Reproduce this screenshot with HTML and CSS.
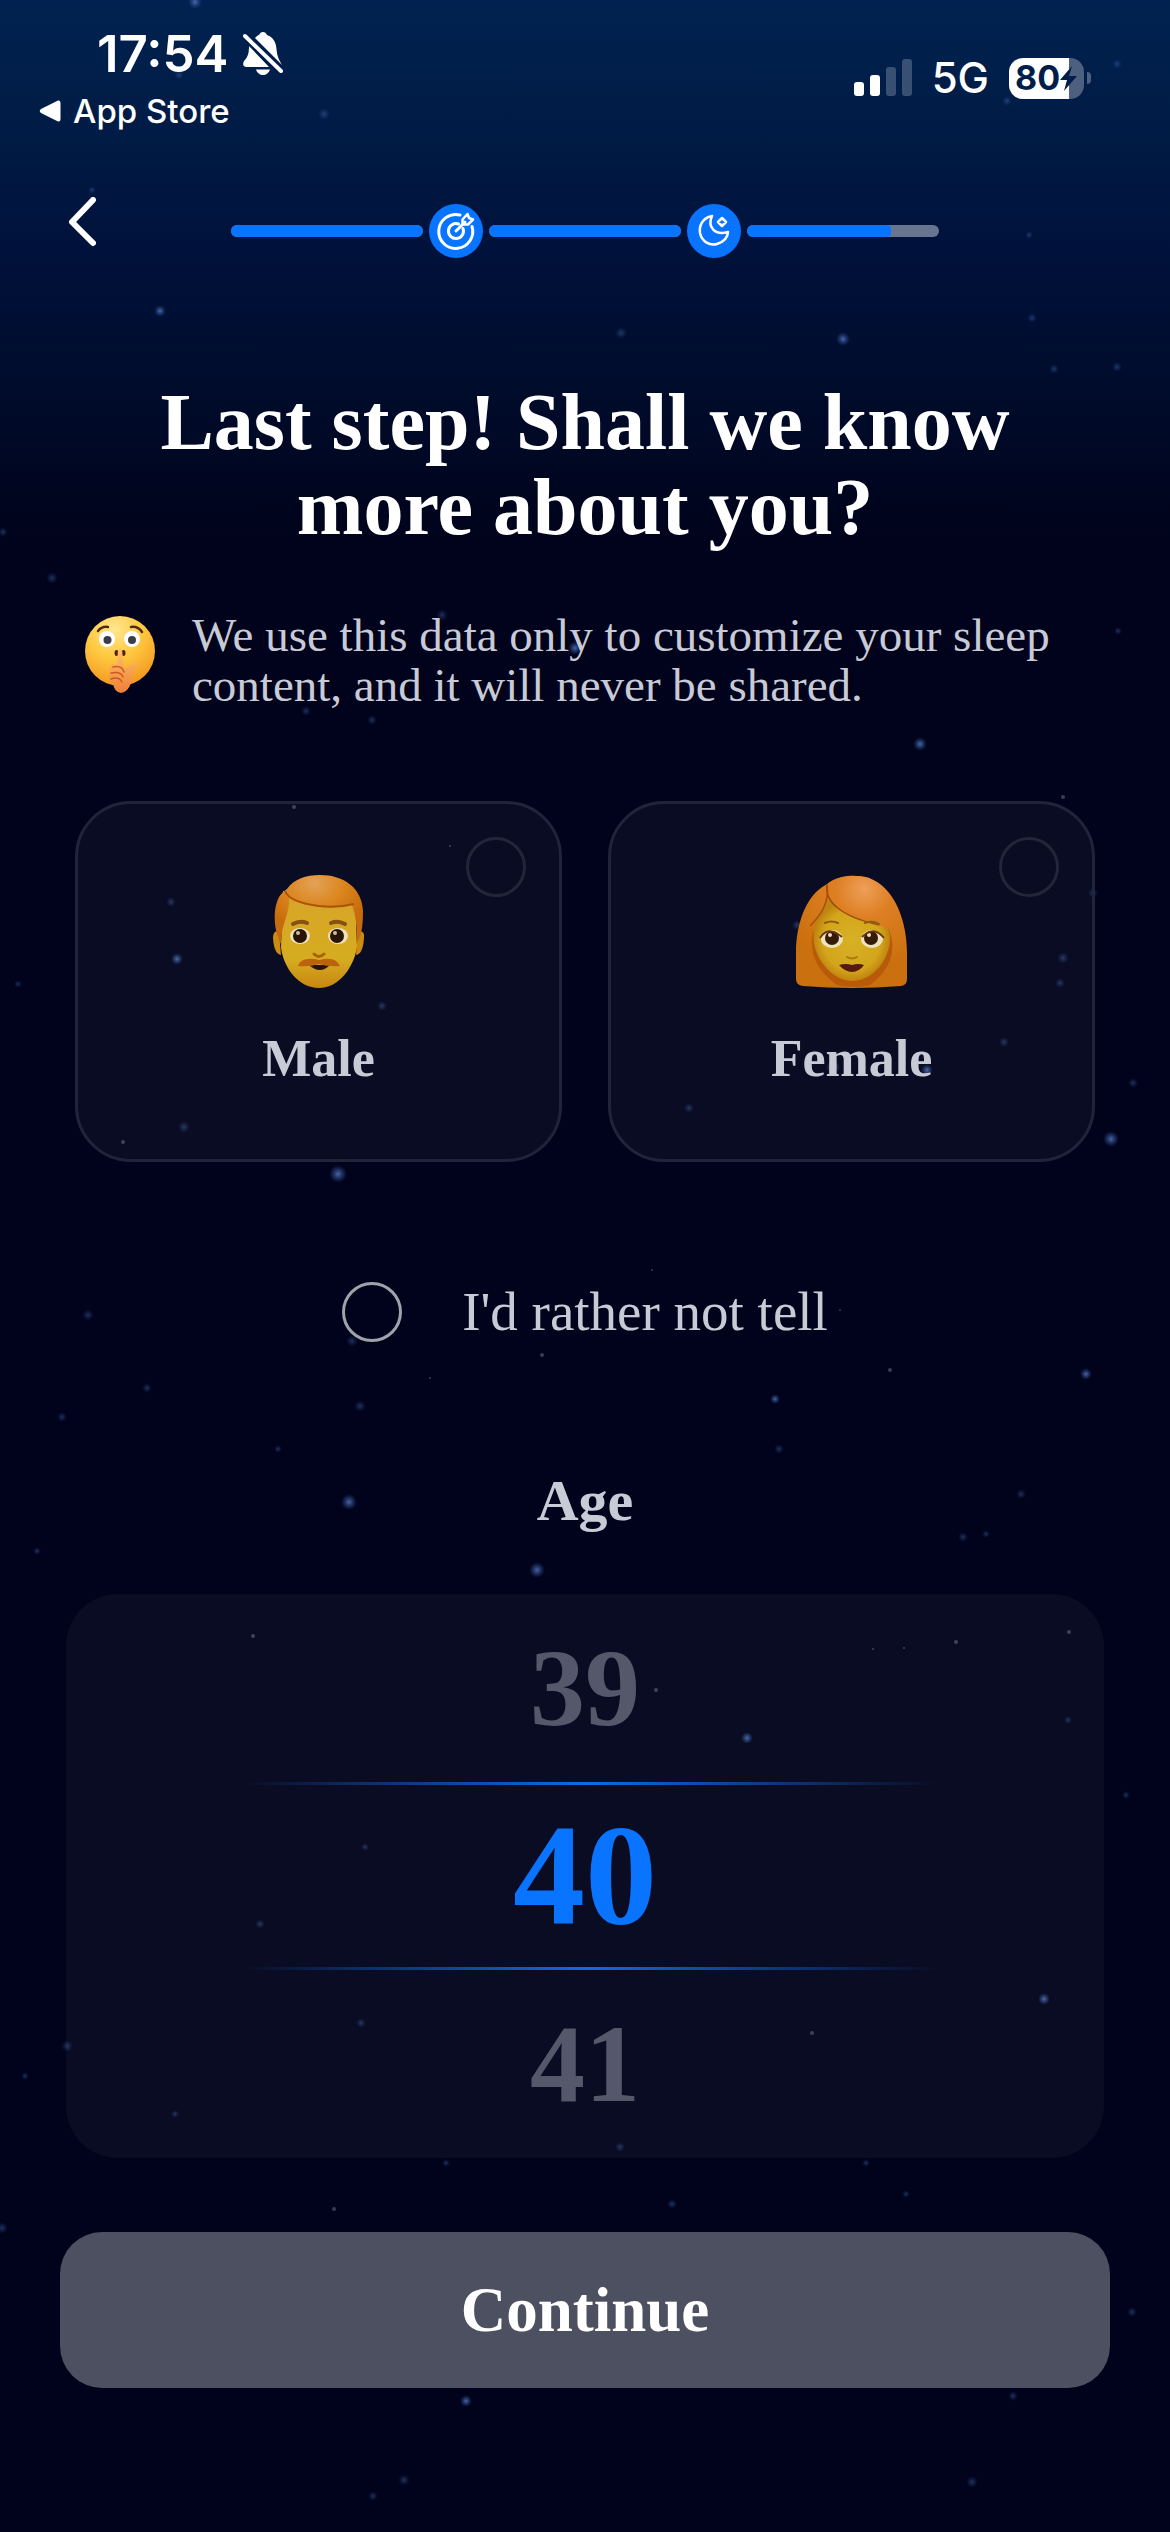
FILE: index.html
```html
<!DOCTYPE html>
<html lang="en">
<head>
<meta charset="utf-8">
<meta name="viewport" content="width=device-width, initial-scale=1">
<title>About you</title>
<link rel="stylesheet" href="styles.css">
</head>
<body>
<svg class="stars" viewBox="0 0 1170 2532" preserveAspectRatio="xMidYMid slice" aria-hidden="true">
  <defs>
    <radialGradient id="star"><stop offset="0" stop-color="#5878bd"/><stop offset=".45" stop-color="#3f5fa6" stop-opacity=".6"/><stop offset="1" stop-color="#2a4a90" stop-opacity="0"/></radialGradient>
  </defs>
  <g fill="url(#star)" opacity=".85">
    <circle cx="338" cy="1174" r="9"/><circle cx="1111" cy="1139" r="8"/><circle cx="349" cy="1502" r="8"/><circle cx="920" cy="744" r="7"/><circle cx="537" cy="1570" r="8"/><circle cx="195" cy="2" r="7"/><circle cx="160" cy="311" r="6"/><circle cx="843" cy="339" r="7"/><circle cx="575" cy="648" r="7"/><circle cx="177" cy="959" r="6"/><circle cx="775" cy="1399" r="5"/><circle cx="747" cy="1738" r="6"/><circle cx="1044" cy="1999" r="6"/><circle cx="466" cy="2401" r="6"/><circle cx="1086" cy="1374" r="6"/><circle cx="833" cy="1067" r="7"/><circle cx="927" cy="1070" r="6"/>
  </g>
  <g fill="url(#star)" opacity=".4">
    <circle cx="179" cy="75" r="5"/><circle cx="324" cy="114" r="6"/><circle cx="1117" cy="64" r="5"/><circle cx="1007" cy="101" r="5"/><circle cx="1029" cy="235" r="4"/><circle cx="92" cy="190" r="4"/><circle cx="621" cy="333" r="6"/><circle cx="1054" cy="369" r="5"/><circle cx="1117" cy="367" r="5"/><circle cx="1032" cy="318" r="5"/><circle cx="52" cy="578" r="6"/><circle cx="3" cy="532" r="5"/><circle cx="442" cy="615" r="6"/><circle cx="306" cy="711" r="5"/><circle cx="372" cy="720" r="5"/><circle cx="1118" cy="631" r="4"/><circle cx="18" cy="984" r="4"/><circle cx="184" cy="1127" r="6"/><circle cx="171" cy="902" r="5"/><circle cx="382" cy="1006" r="5"/><circle cx="1063" cy="958" r="6"/><circle cx="1060" cy="983" r="5"/><circle cx="1093" cy="893" r="5"/><circle cx="1004" cy="1042" r="5"/><circle cx="689" cy="1108" r="5"/><circle cx="797" cy="925" r="5"/><circle cx="1133" cy="1083" r="5"/><circle cx="88" cy="1315" r="6"/><circle cx="147" cy="1388" r="5"/><circle cx="352" cy="1341" r="6"/><circle cx="360" cy="1406" r="6"/><circle cx="278" cy="1449" r="4"/><circle cx="62" cy="1417" r="5"/><circle cx="779" cy="1449" r="5"/><circle cx="1021" cy="1494" r="5"/><circle cx="963" cy="1537" r="5"/><circle cx="986" cy="1534" r="4"/><circle cx="37" cy="1551" r="4"/><circle cx="1126" cy="1795" r="4"/><circle cx="365" cy="1847" r="4"/><circle cx="260" cy="1924" r="5"/><circle cx="361" cy="2023" r="5"/><circle cx="67" cy="2046" r="6"/><circle cx="25" cy="2076" r="4"/><circle cx="175" cy="2114" r="4"/><circle cx="1068" cy="1720" r="4"/><circle cx="620" cy="2147" r="5"/><circle cx="2" cy="2228" r="6"/><circle cx="672" cy="2204" r="5"/><circle cx="446" cy="2163" r="4"/><circle cx="866" cy="2163" r="4"/><circle cx="1013" cy="2396" r="5"/><circle cx="1132" cy="2312" r="5"/><circle cx="404" cy="2480" r="6"/><circle cx="373" cy="2496" r="5"/><circle cx="972" cy="2482" r="6"/><circle cx="906" cy="2194" r="4"/>
  </g>
  <g fill="#8a93ad" opacity=".4">
    <circle cx="123" cy="1142" r="2"/><circle cx="294" cy="807" r="2"/><circle cx="450" cy="846" r="1"/><circle cx="253" cy="1636" r="2"/><circle cx="956" cy="1642" r="2"/><circle cx="1069" cy="1632" r="2"/><circle cx="873" cy="1649" r="1"/><circle cx="904" cy="1648" r="1"/><circle cx="656" cy="1690" r="2"/><circle cx="812" cy="2033" r="2"/><circle cx="890" cy="1370" r="2"/><circle cx="652" cy="1270" r="1"/><circle cx="542" cy="1355" r="2"/><circle cx="430" cy="1378" r="1"/><circle cx="1063" cy="797" r="2"/><circle cx="334" cy="2209" r="2"/><circle cx="840" cy="1310" r="1"/>
  </g>
</svg>

<header>
  <div class="status">
    <div class="status-left">
      <div class="clock">
        <span>17:54</span>
        <svg width="40" height="44" viewBox="0 0 40 44" role="img" aria-label="Silent mode">
          <path fill="#fff" d="M12 6 C14 3.500 16 3 16 3 C17 1 18 0 20 0 C22 0 23 1 24 3 C30 5 33 10 33.500 17 C34 23 35 26 39 33 Z"/>
          <path fill="#fff" d="M6 14 L26 35 H3 C-1 34 0 31 1 29 C5 25 6 21 6 14Z M13 37.500 H27 C26 41 23 43 20 43 C17 43 14 41 13 37.500Z"/>
          <path stroke="#001c4a" stroke-width="8" d="M1 3 L39 40"/>
          <path stroke="#fff" stroke-width="4" stroke-linecap="round" d="M2 4 L38 39"/>
        </svg>
      </div>
      <a class="return" href="#">
        <svg width="22" height="22" viewBox="0 0 22 22" aria-hidden="true"><path fill="#fff" d="M19 .6 Q21.500 0 21.500 3 V19 Q21.500 22 19 21.400 L2 13 Q-.5 11 2 9Z"/></svg>
        <span>App Store</span>
      </a>
    </div>
    <div class="status-right">
      <svg width="58" height="38" viewBox="0 0 58 38" fill="#fff" role="img" aria-label="Signal, two of four bars"><rect y="23" width="10" height="14" rx="3"/><rect x="16" y="16" width="10" height="21" rx="3"/><g opacity=".22"><rect x="32" y="8" width="10" height="29" rx="3"/><rect x="48" width="10" height="37" rx="3"/></g></svg>
      <span class="network">5G</span>
      <span class="battery"><span class="battery-level">80</span>
        <svg width="17" height="25" viewBox="0 0 17 25" aria-hidden="true"><path fill="#001e4b" d="M12 0 L0 14 H7 L4 25 L17 10 H9Z"/></svg>
      </span>
    </div>
  </div>
  <nav class="steps" aria-label="Setup progress">
    <button class="back" type="button" aria-label="Back">
      <svg width="28" height="50" viewBox="0 0 28 50" fill="none" stroke="#fff" stroke-width="6" stroke-linecap="round" stroke-linejoin="round" aria-hidden="true"><path d="M25 3 L4 25 L25 46"/></svg>
    </button>
    <div class="progress">
      <span class="bar"><span class="fill" style="width:100%"></span></span>
      <span class="step">
        <svg width="40" height="40" viewBox="0 0 40 40" fill="none" stroke="#fff" stroke-width="3" stroke-linejoin="round" stroke-linecap="round" aria-hidden="true"><path d="M24 4 A17 17 0 1 0 36 15.500"/><path d="M22.500 13 A7.500 7.500 0 1 0 27 17.500"/><path d="M20 20 L29 11"/><path d="M26.500 12.500 V8.500 L31.500 3 L33 7 L37 8.500 L32 13.500 H28Z" stroke-width="2.500"/></svg>
      </span>
      <span class="bar"><span class="fill" style="width:100%"></span></span>
      <span class="step">
        <svg width="40" height="40" viewBox="0 0 40 40" fill="none" stroke="#fff" stroke-width="2.500" stroke-linejoin="round" aria-hidden="true"><path d="M18 5 C8 7 5 15 6 22 C8 31 16 35 23 33 C30 31 34 26 34 21 C21 25 13 16 18 5Z"/><path d="M28 7 L32 11 L28 15 L24 11Z"/></svg>
      </span>
      <span class="bar"><span class="fill" style="width:75%"></span></span>
    </div>
  </nav>
</header>

<main>
  <h1>Last step! Shall we know more about you?</h1>

  <div class="note">
    <svg width="70" height="78" viewBox="0 0 70 78" aria-hidden="true">
      <defs>
        <radialGradient id="face" cx=".42" cy=".2" r=".85"><stop offset="0" stop-color="#ffe791"/><stop offset=".45" stop-color="#ffca42"/><stop offset="1" stop-color="#f2931c"/></radialGradient>
        <linearGradient id="hand" x1="0" y1="0" x2="0" y2="1"><stop offset="0" stop-color="#ffc36b"/><stop offset="1" stop-color="#ef8038"/></linearGradient>
      </defs>
      <circle cx="35" cy="35" r="35" fill="url(#face)"/>
      <circle cx="22" cy="23" r="8" fill="#fff"/><circle cx="47" cy="23" r="8" fill="#fff"/>
      <circle cx="22.500" cy="24" r="4" fill="#3b3d48"/><circle cx="47" cy="24" r="4" fill="#3b3d48"/>
      <path d="M13 15 Q17 10 23 11 M46 11 Q53 10 57 16" fill="none" stroke="#4f2b10" stroke-width="2.500" stroke-linecap="round"/>
      <ellipse cx="31.500" cy="37" rx="2" ry="3" fill="#54220e"/><ellipse cx="38.500" cy="37" rx="2" ry="3" fill="#54220e"/>
      <path d="M32 49 L33 34 Q35 31 37 34 L39 53 L47 49 Q50 48 53 48 Q52 51 48 55 L46 67 Q43 76 36 77 Q29 76 28 67 Q22 64 25 57 Q23 51 28 48Z" fill="url(#hand)"/>
      <path d="M28 51 Q37 49 39 56 M26 57 Q36 55 38 61 M26 63 Q34 60 37 66" fill="none" stroke="#cc5a24" stroke-width="1.500" stroke-linecap="round"/>
    </svg>
    <p>We use this data only to customize your sleep content, and it will never be shared.</p>
  </div>

  <form>
    <div class="choices">
      <label class="card">
        <input class="radio" type="radio" name="gender" value="male">
        <svg width="120" height="120" viewBox="0 0 120 120" aria-hidden="true">
          <defs>
            <linearGradient id="manskin" x1="0" y1="0" x2="0" y2="1"><stop offset="0" stop-color="#d8a42a"/><stop offset=".7" stop-color="#d6ac20"/><stop offset="1" stop-color="#c78612"/></linearGradient>
            <radialGradient id="manhair" cx=".45" cy=".12" r=".65"><stop offset="0" stop-color="#e3a258"/><stop offset=".5" stop-color="#dc861f"/><stop offset="1" stop-color="#c76c0c"/></radialGradient>
          </defs>
          <path d="M20 60 Q14 59 14 67 Q15 83 22 84Z M99 60 Q106 59 105 67 Q104 83 97 84Z" fill="#cb8c10"/>
          <path d="M24 20 H96 L98 76 C95 96 80 117 60 117 C39 117 24 96 22 76Z" fill="url(#manskin)"/>
          <path d="M22 73 C15 61 14 41 18 31 C20 24 25 20 28 18 C35 8 47 4 61 4 C85 4 103 17 104 40 C104 56 102 66 98 72 C98 56 97 45 93 34 C71 39 43 36 30 27 C31 43 22 53 22 73Z" fill="url(#manhair)"/>
          <path d="M26 20 Q30 31 60 35 Q79 37 95 33" fill="none" stroke="#a95407" stroke-width="2"/>
          <ellipse cx="41" cy="65" rx="10" ry="8" fill="#eee0ba"/><ellipse cx="79" cy="65" rx="10" ry="8" fill="#eee0ba"/>
          <circle cx="41" cy="65" r="7" fill="#291507"/><circle cx="78" cy="65" r="7" fill="#291507"/>
          <circle cx="39" cy="62" r="2" fill="#c9bda7"/><circle cx="76" cy="62" r="2" fill="#c9bda7"/>
          <path d="M34 53 Q41 49 48 52 M72 52 Q79 49 86 53" fill="none" stroke="#875114" stroke-width="4" stroke-linecap="round"/>
          <path d="M55 83 Q60 88 65 83" fill="none" stroke="#a66309" stroke-width="3" stroke-linecap="round"/>
          <path d="M50 94 H71 Q61 104 50 94Z" fill="#271608"/>
          <path d="M39 95 Q42 86 56 88 L60 89 L65 88 Q77 86 81 95 Q69 96 60 93 Q51 96 39 95Z" fill="#bc640c"/>
        </svg>
        <span class="card-name">Male</span>
      </label>
      <label class="card">
        <input class="radio" type="radio" name="gender" value="female">
        <svg width="120" height="120" viewBox="0 0 120 120" aria-hidden="true">
          <defs>
            <radialGradient id="womhair" gradientUnits="userSpaceOnUse" cx="72" cy="18" r="80"><stop offset="0" stop-color="#ee9f58"/><stop offset=".35" stop-color="#de7f24"/><stop offset="1" stop-color="#cb700e"/></radialGradient>
            <radialGradient id="womskin"><stop offset="0" stop-color="#d8b125"/><stop offset=".75" stop-color="#d3a51b"/><stop offset="1" stop-color="#bf830f"/></radialGradient>
          </defs>
          <path d="M38 12 C46 4 66 4 77 7 C104 17 115 52 115 82 V108 Q115 114 109 115 Q60 119 11 115 Q4 114 4 108 V82 C4 50 16 20 38 12Z" fill="url(#womhair)"/>
          <path d="M21 60 Q14 92 45 114 Q60 118 78 114 Q109 91 97 58Z" fill="#b85a0a"/>
          <path d="M36 29 C24 45 20 54 22 72 C25 92 43 110 60 110 C79 110 96 92 98 70 Q99 57 90 50 Q62 47 38 29Z" fill="url(#womskin)"/>
          <path d="M35 13 Q34 29 47 38 Q60 48 86 54 Q103 58 113 77 C109 43 98 17 77 7 C64 3 46 4 35 13Z" fill="url(#womhair)"/>
          <path d="M35 13 Q33 28 47 38 Q60 48 87 54" fill="none" stroke="#9e4e09" stroke-width="1.500"/>
          <path d="M35 13 C38 32 28 45 18 55" fill="none" stroke="#a8510b" stroke-width="1.500"/>
          <ellipse cx="40" cy="68" rx="11" ry="9" fill="#eee1bb"/><ellipse cx="80" cy="68" rx="11" ry="9" fill="#eee1bb"/>
          <circle cx="40" cy="67" r="7" fill="#351c08"/><circle cx="79" cy="67" r="7" fill="#351c08"/>
          <circle cx="38" cy="64" r="2" fill="#eee1bb"/><circle cx="77" cy="64" r="2" fill="#eee1bb"/>
          <path d="M28 67 Q36 54 50 66 M70 66 Q82 54 92 67" fill="none" stroke="#6c3909" stroke-width="2"/>
          <path d="M33 52 Q39 49 46 52 M73 52 Q80 49 87 53" fill="none" stroke="#8c5c12" stroke-width="2" stroke-linecap="round"/>
          <path d="M55 86 Q60 89 65 86" fill="none" stroke="#b37510" stroke-width="2" stroke-linecap="round"/>
          <path d="M47 94 Q54 92 60 94 Q66 92 72 94 Q67 101 60 101 Q53 101 47 94Z" fill="#56190b"/>
        </svg>
        <span class="card-name">Female</span>
      </label>
    </div>

    <label class="decline">
      <input class="radio radio-bright" type="radio" name="gender" value="none">
      <span>I'd rather not tell</span>
    </label>

    <fieldset class="age">
      <legend>Age</legend>
      <div class="picker">
        <label class="row"><input type="radio" name="age" value="39"><span>39</span></label>
        <label class="row"><input type="radio" name="age" value="40" checked><span>40</span></label>
        <label class="row"><input type="radio" name="age" value="41"><span>41</span></label>
      </div>
    </fieldset>

    <button class="continue" type="submit">Continue</button>
  </form>
</main>
</body>
</html>
```
FILE: styles.css
```css
* {
  box-sizing: border-box;
}

body {
  position: relative;
  margin: 0;
  min-height: 100vh;
  background: #00031b linear-gradient(#012250 0, #001c46 120px, #00113a 260px, #000b2a 400px, #00031b 540px) no-repeat;
  color: #fff;
  font-family: "Liberation Serif", "Times New Roman", serif;
}

svg {
  display: block;
  flex: none;
}

button {
  border: 0;
  color: inherit;
  font: inherit;
  cursor: pointer;
}

.stars {
  position: absolute;
  inset: 0;
  width: 100%;
  height: 100%;
  z-index: -1;
}

/* Status bar */
.status {
  display: flex;
  justify-content: space-between;
  align-items: flex-start;
  padding: 24px 86px 0 39px;
  font-family: Inter, "Liberation Sans", sans-serif;
}

.status-left {
  display: grid;
  gap: 5px;
}

.clock {
  display: flex;
  align-items: center;
  gap: 14px;
  padding-left: 58px;
  font-size: 51px;
  font-weight: 600;
  line-height: 60px;
}

.return {
  display: flex;
  align-items: center;
  gap: 12px;
  color: inherit;
  font-size: 33px;
  font-weight: 500;
  line-height: 44px;
  text-decoration: none;
}

.status-right {
  display: flex;
  align-items: center;
  gap: 20px;
  padding-top: 33px;
}

.network {
  font-size: 42px;
  font-weight: 500;
  line-height: 42px;
}

.battery {
  position: relative;
  display: flex;
  align-items: center;
  width: 75px;
  height: 41px;
  padding-left: 6px;
  border-radius: 14px;
  background: linear-gradient(90deg, #fff 80%, #4e6080 80%);
  color: #001e4b;
}

.battery::after {
  content: "";
  position: absolute;
  left: 78px;
  width: 4px;
  height: 12px;
  border-radius: 0 6px 6px 0;
  background: #4e6080;
}

.battery-level {
  font-size: 34px;
  font-weight: 700;
  line-height: 40px;
}

/* Step progress */
.steps {
  display: grid;
  grid-template-columns: 171px 1fr 171px;
  align-items: center;
  height: 78px;
  margin-top: 59px;
  padding: 0 60px;
}

.back {
  align-self: start;
  width: 60px;
  height: 60px;
  padding: 5px 8px;
  background: none;
}

.progress {
  display: flex;
  align-items: center;
  gap: 6px;
}

.bar {
  flex: 1;
  height: 12px;
  overflow: hidden;
  border-radius: 6px;
  background: #68758f;
}

.fill {
  display: block;
  height: 100%;
  border-radius: 0 4px 4px 0;
  background: #0874ff;
}

.step {
  display: grid;
  place-items: center;
  width: 54px;
  height: 54px;
  border-radius: 50%;
  background: #0874ff;
}

/* Content */
main {
  padding: 110px 60px 140px;
}

h1 {
  margin: 0;
  padding: 0 60px;
  font-size: 80px;
  line-height: 85px;
  text-align: center;
}

.note {
  display: flex;
  align-items: flex-start;
  gap: 37px;
  margin-top: 60px;
  padding: 0 25px;
  color: #c8cad6;
  font-size: 47px;
  line-height: 50px;
}

.note svg {
  margin-top: 6px;
}

.note p {
  margin: 0;
}

.choices {
  display: grid;
  grid-template-columns: 1fr 1fr;
  gap: 46px;
  margin-top: 91px;
  padding: 0 15px;
}

.card {
  position: relative;
  display: grid;
  justify-items: center;
  gap: 38px;
  padding: 67px 20px 70px;
  border: 3px solid #20243a;
  border-radius: 56px;
  background: rgb(255 255 255 / 4%);
}

.radio {
  appearance: none;
  width: 60px;
  height: 60px;
  margin: 0;
  border: 3px solid #22263a;
  border-radius: 50%;
}

.radio:checked {
  background: #0874ff;
}

.card .radio {
  position: absolute;
  top: 33px;
  right: 33px;
}

.radio-bright {
  border-color: #a0a2aa;
}

.card-name {
  color: #c8cad6;
  font-size: 52px;
  font-weight: 700;
  line-height: 60px;
}

.decline {
  display: flex;
  justify-content: center;
  align-items: center;
  gap: 60px;
  margin-top: 120px;
  color: #c8cad6;
  font-size: 55px;
  line-height: 60px;
}

.age {
  margin: 127px 6px 0;
  padding: 0;
  border: 0;
}

.age legend {
  width: 100%;
  padding: 0 0 61px;
  color: #c8cad6;
  font-size: 58px;
  font-weight: 700;
  line-height: 64px;
  text-align: center;
}

.picker {
  border-radius: 52px;
  background: rgb(255 255 255 / 4%);
}

.row {
  position: relative;
  display: grid;
  place-items: center;
  height: 188px;
  color: #55576a;
  font-size: 110px;
  font-weight: 700;
  line-height: 120px;
}

.row input {
  position: absolute;
  opacity: 0;
}

/* The chosen age sits between two fading rules */
.row:has(:checked) {
  --rule: linear-gradient(90deg, transparent 17%, #0f6be8 50%, transparent 84%);
  background: var(--rule) top / 100% 3px no-repeat, var(--rule) bottom / 100% 3px no-repeat;
  color: #0874ff;
  font-size: 144px;
}

.continue {
  display: block;
  width: 100%;
  height: 156px;
  margin-top: 74px;
  border-radius: 42px;
  background: #4d5060;
  font-size: 63px;
  font-weight: 700;
}
```
